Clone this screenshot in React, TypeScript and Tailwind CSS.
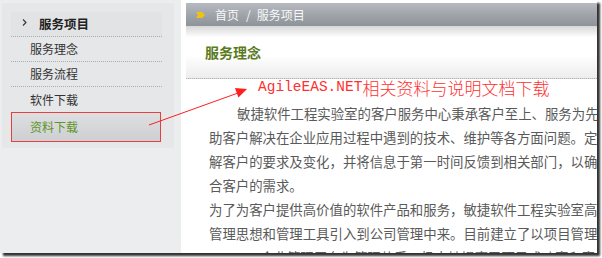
import React from "react";

const cjk = { fontFamily: '"Noto Sans CJK SC", "Noto Sans", sans-serif' };

const menuItems = ["服务理念", "服务流程", "软件下载"];

const bodyLines = [
  { text: "敏捷软件工程实验室的客户服务中心秉承客户至上、服务为先的宗旨", indent: true },
  { text: "助客户解决在企业应用过程中遇到的技术、维护等各方面问题。定期", indent: false },
  { text: "解客户的要求及变化，并将信息于第一时间反馈到相关部门，以确保", indent: false },
  { text: "合客户的需求。", indent: false },
  { text: "为了为客户提供高价值的软件产品和服务，敏捷软件工程实验室高度", indent: false },
  { text: "管理思想和管理工具引入到公司管理中来。目前建立了以项目管理为", indent: false },
  { text: "+EIS.net企业管理平台为管理体系，极大地提高了项目成功率和客户", indent: false },
];

function SideMenu() {
  return (
    <div className="w-[181px] shrink-0 bg-[#ecedef] pl-[2px] pt-[3px]">
      <div className="w-[172px] bg-[#e6e7e9] pt-[9px] pb-[6px] pl-[9px]" style={cjk}>
        {/* section title */}
        <div className="flex h-[25px] w-[151px] items-center border-b border-dotted border-[#a9abae] bg-[#e2e3e5] pl-[11px]">
          <svg width="5" height="7" viewBox="0 0 5 7" className="mb-[4px]">
            <path d="M1 0.5 L4 3.5 L1 6.5" fill="none" stroke="#333" strokeWidth="1.1" />
          </svg>
          <span className="ml-[12px] text-[12.5px] font-bold text-[#222]">服务项目</span>
        </div>
        {menuItems.map((item, i) => (
          <div
            key={item}
            className={
              "flex h-[25px] w-[151px] items-center pl-[19px] text-[12px] text-[#333] " +
              (i < 2 ? "border-b border-dotted border-[#a9abae]" : "")
            }
          >
            {item}
          </div>
        ))}
        <div className="flex h-[30px] w-[150px] items-center border border-[#e6403e] bg-gradient-to-b from-[#dedfe1] to-[#cdcfd2] pl-[18px] text-[12px] text-[#5f9428]">
          资料下载
        </div>
      </div>
    </div>
  );
}

function ContentArea() {
  return (
    <div className="flex-1 overflow-hidden bg-white pl-[5px] pt-[3px]">
      {/* breadcrumb bar */}
      <div className="flex h-[23px] items-center bg-gradient-to-b from-[#b7bbc1] via-[#a0a5ab] to-[#8d9399] pl-[10px]" style={cjk}>
        <svg width="9" height="6" viewBox="0 0 9 6">
          <polygon points="0,0 6,0 9,3 6,6 0,6 2,3" fill="#f2c210" />
        </svg>
        <span className="ml-[10px] text-[12px] text-[#f7f7f7]">首页</span>
        <span className="ml-[7px] text-[12px] text-[#f7f7f7]">/</span>
        <span className="ml-[6px] text-[12px] text-[#f7f7f7]">服务项目</span>
      </div>
      <div className="flex h-[53px] items-center border-b border-dotted border-[#b5b5b5] bg-[linear-gradient(to_bottom,#d6d7d9,#ffffff_22%,#ffffff_55%,#ededed)] pl-[19px]">
        <span className="text-[14px] font-bold text-[#5a7b1c]" style={cjk}>
          服务理念
        </span>
      </div>

      {/* annotation title */}
      <div className="flex h-[18px] items-center whitespace-nowrap pl-[72px] text-[#ff3030]">
        <span className="text-[14.5px]" style={{ fontFamily: '"Liberation Mono", monospace' }}>
          AgileEAS.NET
        </span>
        <span className="text-[17px] font-light leading-[18px]" style={cjk}>
          相关资料与说明文档下载
        </span>
      </div>

      <div className="mt-[4px] pl-[23px] text-[13.4px] leading-[24px] text-[#5a5a5a]" style={cjk}>
        {bodyLines.map((line) => (
          <div key={line.text} className={"whitespace-nowrap " + (line.indent ? "pl-[28px]" : "")}>
            {line.text}
          </div>
        ))}
      </div>
    </div>
  );
}

export default function App() {
  return (
    <div className="relative h-[258px] w-[602px] overflow-hidden bg-white">
      <div className="flex h-[253px] w-[597px] shadow-[3px_3px_2px_rgba(0,0,0,0.8)]">
        <SideMenu />
        <ContentArea />
      </div>
      {/* red pointer arrow */}
      <svg className="pointer-events-none absolute left-0 top-0" width="602" height="258">
        <line x1="149" y1="125" x2="238" y2="93" stroke="#ff1e1e" strokeWidth="1" />
        <polygon points="247,89 238.4,97.5 235,88.1" fill="#ff1e1e" />
      </svg>
    </div>
  );
}
